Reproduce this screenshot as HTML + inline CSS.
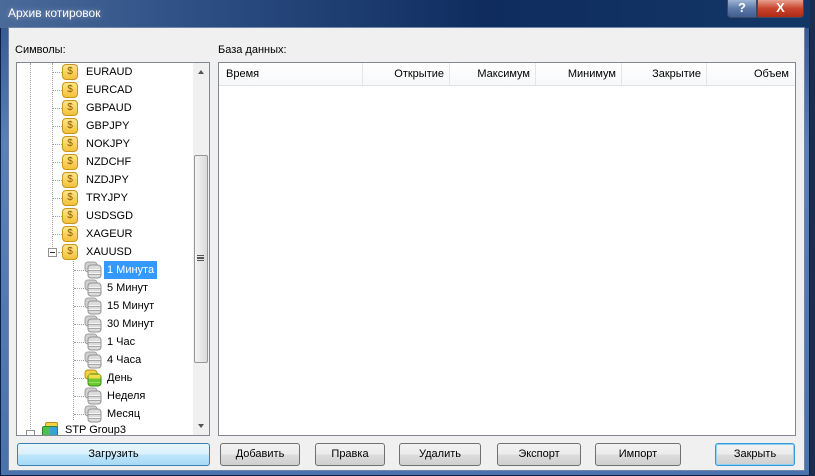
<!DOCTYPE html>
<html><head><meta charset="utf-8"><style>
*{margin:0;padding:0;box-sizing:border-box}
body{width:815px;height:476px;overflow:hidden;background:#1b2d4f;font-family:"Liberation Sans",sans-serif;font-size:11px;color:#000;position:relative}
.abs{position:absolute}
#title{left:0;top:0;width:810px;height:28px;background:linear-gradient(90deg,#4a6a9a 0,#2c4e82 25%,#0f2c5e 60%,#123766 100%)}
#frame{left:0;top:0;width:810px;height:476px;border:1px solid #0c1f40;background:linear-gradient(180deg,#2f5289,#5b80b8 30%,#4a72ad);}
#client{left:8px;top:27px;width:797px;height:444px;background:#f0f0f0;border:1px solid #6e87a8}
.tb{top:0;height:18px;border:1px solid #3a4a66;border-top:none;color:#fff;font-weight:bold;text-align:center;line-height:16px;font-size:13px}
.box{background:#fff;border:1px solid #828790}
.row{position:absolute;height:18px;line-height:18px;white-space:nowrap}
.dol{position:absolute;width:16px;height:16px;border:1px solid #c8961e;border-radius:4px;background:linear-gradient(#ffe58a,#f3c13a);font-size:10px;color:#8a5a00;text-align:center;line-height:14px}
.db{position:absolute;width:18px;height:18px}
.hd{position:absolute;left:0;right:0;top:0;height:23px;border-bottom:1px solid #e3e3e3;background:linear-gradient(#fff,#f7f8fa)}
.col{position:absolute;top:0;height:23px;line-height:23px;border-right:1px solid #e5e5e5;text-align:right;padding-right:5px}
.btn{position:absolute;top:443px;height:23px;border:1px solid #707070;border-radius:3px;background:linear-gradient(#f2f2f2 0,#ebebeb 50%,#dddddd 51%,#cfcfcf);text-align:center;line-height:21px}
.vd{position:absolute;border-left:1px dotted #a0a0a0;width:0}
.hdt{position:absolute;border-top:1px dotted #a0a0a0;height:0}
</style></head><body>
<div id="frame" class="abs"></div>
<div id="title" class="abs"></div>
<div class="abs" style="left:8px;top:6px;color:#fff;font-size:12px;text-shadow:0 0 6px #9ab">Архив котировок</div>
<div class="abs tb" style="left:727px;width:30px;background:linear-gradient(#9fb4d4,#5d7aa8 50%,#3f5d8f);border-radius:0 0 0 4px">?</div>
<div class="abs tb" style="left:757px;width:47px;background:linear-gradient(#e8a08e,#c8442e 50%,#b02a16);border-radius:0 0 4px 0">X</div>
<div id="client" class="abs"></div>
<div class="abs" style="left:15px;top:44px">Символы:</div>
<div class="abs" style="left:218px;top:44px">База данных:</div>

<svg width="0" height="0" style="position:absolute"><defs>
 <g id="g"><rect x="1" y="1" width="12" height="10" rx="3" fill="#d0d0d0" stroke="#a0a0a0"/><rect x="4" y="4" width="13" height="13" rx="3" fill="#dcdcdc" stroke="#939393"/><line x1="4.5" y1="8.5" x2="16.5" y2="8.5" stroke="#f4f4f4"/><line x1="4.5" y1="12.5" x2="16.5" y2="12.5" stroke="#f4f4f4"/><line x1="4.5" y1="9.5" x2="16.5" y2="9.5" stroke="#a8a8a8"/><line x1="4.5" y1="13.5" x2="16.5" y2="13.5" stroke="#a8a8a8"/></g>
 <g id="y"><rect x="1" y="1" width="12" height="9" rx="3" fill="#f5d040" stroke="#b89020"/><rect x="4" y="5" width="13" height="12" rx="3" fill="#6bc830" stroke="#3d8a18"/><rect x="4.5" y="5.5" width="12" height="4" fill="#f2dc4a"/><line x1="4.5" y1="13.5" x2="16.5" y2="13.5" stroke="#9be060"/></g>
</defs></svg>

<div class="abs box" style="left:16px;top:62px;width:194px;height:374px;overflow:hidden">
 <div class="vd" style="left:13px;top:0;height:372px"></div>
 <div class="vd" style="left:35px;top:0;height:186px"></div>
 <div class="vd" style="left:56px;top:196px;height:161px"></div>
 <div class="hdt" style="left:36px;top:9px;width:9px"></div>
 <div class="hdt" style="left:36px;top:27px;width:9px"></div>
 <div class="hdt" style="left:36px;top:45px;width:9px"></div>
 <div class="hdt" style="left:36px;top:63px;width:9px"></div>
 <div class="hdt" style="left:36px;top:81px;width:9px"></div>
 <div class="hdt" style="left:36px;top:99px;width:9px"></div>
 <div class="hdt" style="left:36px;top:117px;width:9px"></div>
 <div class="hdt" style="left:36px;top:135px;width:9px"></div>
 <div class="hdt" style="left:36px;top:153px;width:9px"></div>
 <div class="hdt" style="left:36px;top:171px;width:9px"></div>
 <div class="hdt" style="left:41px;top:189px;width:4px"></div>
 <div class="abs" style="left:31px;top:185px;width:9px;height:9px;border:1px solid #919191;background:#fff"><div class="abs" style="left:1px;top:3px;width:5px;height:1px;background:#333"></div></div>
 <div class="dol" style="left:45px;top:1px">$</div><div class="row" style="left:69px;top:0">EURAUD</div>
 <div class="dol" style="left:45px;top:19px">$</div><div class="row" style="left:69px;top:18px">EURCAD</div>
 <div class="dol" style="left:45px;top:37px">$</div><div class="row" style="left:69px;top:36px">GBPAUD</div>
 <div class="dol" style="left:45px;top:55px">$</div><div class="row" style="left:69px;top:54px">GBPJPY</div>
 <div class="dol" style="left:45px;top:73px">$</div><div class="row" style="left:69px;top:72px">NOKJPY</div>
 <div class="dol" style="left:45px;top:91px">$</div><div class="row" style="left:69px;top:90px">NZDCHF</div>
 <div class="dol" style="left:45px;top:109px">$</div><div class="row" style="left:69px;top:108px">NZDJPY</div>
 <div class="dol" style="left:45px;top:127px">$</div><div class="row" style="left:69px;top:126px">TRYJPY</div>
 <div class="dol" style="left:45px;top:145px">$</div><div class="row" style="left:69px;top:144px">USDSGD</div>
 <div class="dol" style="left:45px;top:163px">$</div><div class="row" style="left:69px;top:162px">XAGEUR</div>
 <div class="dol" style="left:45px;top:181px">$</div><div class="row" style="left:69px;top:180px">XAUUSD</div>
 <div class="hdt" style="left:57px;top:207px;width:10px"></div>
 <div class="hdt" style="left:57px;top:225px;width:10px"></div>
 <div class="hdt" style="left:57px;top:243px;width:10px"></div>
 <div class="hdt" style="left:57px;top:261px;width:10px"></div>
 <div class="hdt" style="left:57px;top:279px;width:10px"></div>
 <div class="hdt" style="left:57px;top:297px;width:10px"></div>
 <div class="hdt" style="left:57px;top:315px;width:10px"></div>
 <div class="hdt" style="left:57px;top:333px;width:10px"></div>
 <div class="hdt" style="left:57px;top:351px;width:10px"></div>
 <svg class="db" style="left:67px;top:198px"><use href="#g"/></svg><div class="row" style="top:198px;background:#3399ff;color:#fff;padding:0 3px;left:87px">1 Минута</div>
 <svg class="db" style="left:67px;top:216px"><use href="#g"/></svg><div class="row" style="left:90px;top:216px">5 Минут</div>
 <svg class="db" style="left:67px;top:234px"><use href="#g"/></svg><div class="row" style="left:90px;top:234px">15 Минут</div>
 <svg class="db" style="left:67px;top:252px"><use href="#g"/></svg><div class="row" style="left:90px;top:252px">30 Минут</div>
 <svg class="db" style="left:67px;top:270px"><use href="#g"/></svg><div class="row" style="left:90px;top:270px">1 Час</div>
 <svg class="db" style="left:67px;top:288px"><use href="#g"/></svg><div class="row" style="left:90px;top:288px">4 Часа</div>
 <svg class="db" style="left:67px;top:306px"><use href="#y"/></svg><div class="row" style="left:90px;top:306px">День</div>
 <svg class="db" style="left:67px;top:324px"><use href="#g"/></svg><div class="row" style="left:90px;top:324px">Неделя</div>
 <svg class="db" style="left:67px;top:342px"><use href="#g"/></svg><div class="row" style="left:90px;top:342px">Месяц</div>
 <div class="abs" style="left:28px;top:359px;width:13px;height:10px;border:1px solid #b89020;background:#f5d040;border-radius:2px"></div>
 <div class="abs" style="left:25px;top:363px;width:16px;height:12px;border:1px solid #2a8a2a;background:linear-gradient(90deg,#4fc04f 50%,#3aa0d8 50%);border-radius:2px"></div>
 <div class="abs" style="left:9px;top:367px;width:9px;height:9px;border:1px solid #919191;background:#fff"></div>
 <div class="row" style="left:48px;top:358px">STP Group3</div>
 <div class="abs" style="left:176px;top:0;width:16px;height:372px;background:#f0f0f0"></div>
 <div class="abs" style="left:181px;top:7px;width:0;height:0;border-left:3px solid transparent;border-right:3px solid transparent;border-bottom:4px solid #555"></div>
 <div class="abs" style="left:181px;top:361px;width:0;height:0;border-left:3px solid transparent;border-right:3px solid transparent;border-top:4px solid #555"></div>
 <div class="abs" style="left:177px;top:92px;width:14px;height:208px;border:1px solid #969696;border-radius:2px;background:linear-gradient(90deg,#f4f4f4,#dadada)"></div>
 <div class="abs" style="left:180px;top:192px;width:7px;height:6px;border-top:1px solid #555;border-bottom:1px solid #555"><div style="margin-top:1px;border-top:1px solid #555;height:2px;border-bottom:1px solid #555"></div></div>
</div>

<div class="abs box" style="left:218px;top:62px;width:578px;height:374px">
 <div class="hd">
  <div class="col" style="left:0;width:144px;text-align:left;padding-left:7px">Время</div>
  <div class="col" style="left:144px;width:87px">Открытие</div>
  <div class="col" style="left:231px;width:86px">Максимум</div>
  <div class="col" style="left:317px;width:86px">Минимум</div>
  <div class="col" style="left:403px;width:85px">Закрытие</div>
  <div class="col" style="left:488px;width:88px;border:none;padding-right:6px">Объем</div>
 </div>
</div>

<div class="btn" style="left:17px;width:193px;border-color:#3c7fb1;background:linear-gradient(#eaf6fd 0,#d9f0fc 50%,#bee6fd 51%,#a7d9f5)">Загрузить</div>
<div class="btn" style="left:220px;width:80px">Добавить</div>
<div class="btn" style="left:315px;width:70px">Правка</div>
<div class="btn" style="left:399px;width:82px">Удалить</div>
<div class="btn" style="left:497px;width:84px">Экспорт</div>
<div class="btn" style="left:595px;width:86px">Импорт</div>
<div class="btn" style="left:715px;width:80px;border-color:#3399dd;box-shadow:inset 0 0 0 1px #8fd0f5">Закрыть</div>
</body></html>
